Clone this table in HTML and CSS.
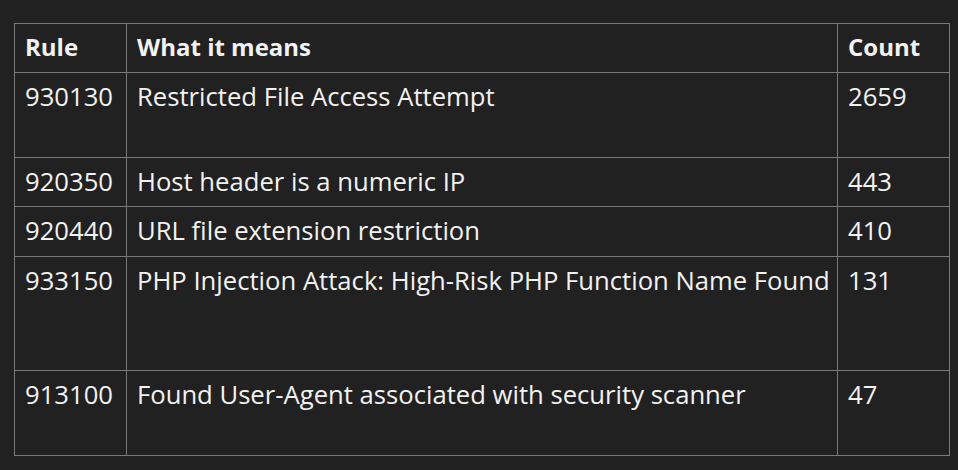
FILE: index.html
```html
<!DOCTYPE html>
<html lang="en">
<head>
<meta charset="utf-8">
<title>Rules</title>
<link rel="stylesheet" href="styles.css">
</head>
<body>
<table class="rules">
  <colgroup>
    <col class="c-rule">
    <col class="c-desc">
    <col class="c-count">
  </colgroup>
  <thead>
    <tr class="h49">
      <th>Rule</th>
      <th>What it means</th>
      <th>Count</th>
    </tr>
  </thead>
  <tbody>
    <tr class="h85">
      <td>930130</td>
      <td>Restricted File Access Attempt</td>
      <td>2659</td>
    </tr>
    <tr class="h49">
      <td>920350</td>
      <td>Host header is a numeric IP</td>
      <td>443</td>
    </tr>
    <tr class="h50">
      <td>920440</td>
      <td>URL file extension restriction</td>
      <td>410</td>
    </tr>
    <tr class="h114">
      <td>933150</td>
      <td>PHP Injection Attack: High-Risk PHP Function Name Found</td>
      <td>131</td>
    </tr>
    <tr class="h85">
      <td>913100</td>
      <td>Found User-Agent associated with security scanner</td>
      <td>47</td>
    </tr>
  </tbody>
</table>
</body>
</html>
```
FILE: styles.css
```css
html, body {
  background: #212121;
}
body {
  margin: 0;
  padding: 23px 0 0 14px;
  font-family: "Open Sans", Lato, sans-serif;
  color: #f2f2f2;
}
.rules {
  border-collapse: collapse;
  table-layout: fixed;
  width: 935px;
  font-size: 25.65px;
}
.c-rule { width: 112px; }
.c-desc { width: 711px; }
.c-count { width: 112px; }
.rules th,
.rules td {
  border: 1px solid #7a7a7a;
  padding: 8px 10px 0 10px;
  text-align: left;
  vertical-align: top;
  white-space: nowrap;
  line-height: 30px;
}
.rules td {
  padding-top: 9px;
}
.rules th {
  font-size: 24px;
  font-weight: 700;
}
.h49 { height: 49px; }
.h50 { height: 50px; }
.h85 { height: 85px; }
.h114 { height: 114px; }
```
